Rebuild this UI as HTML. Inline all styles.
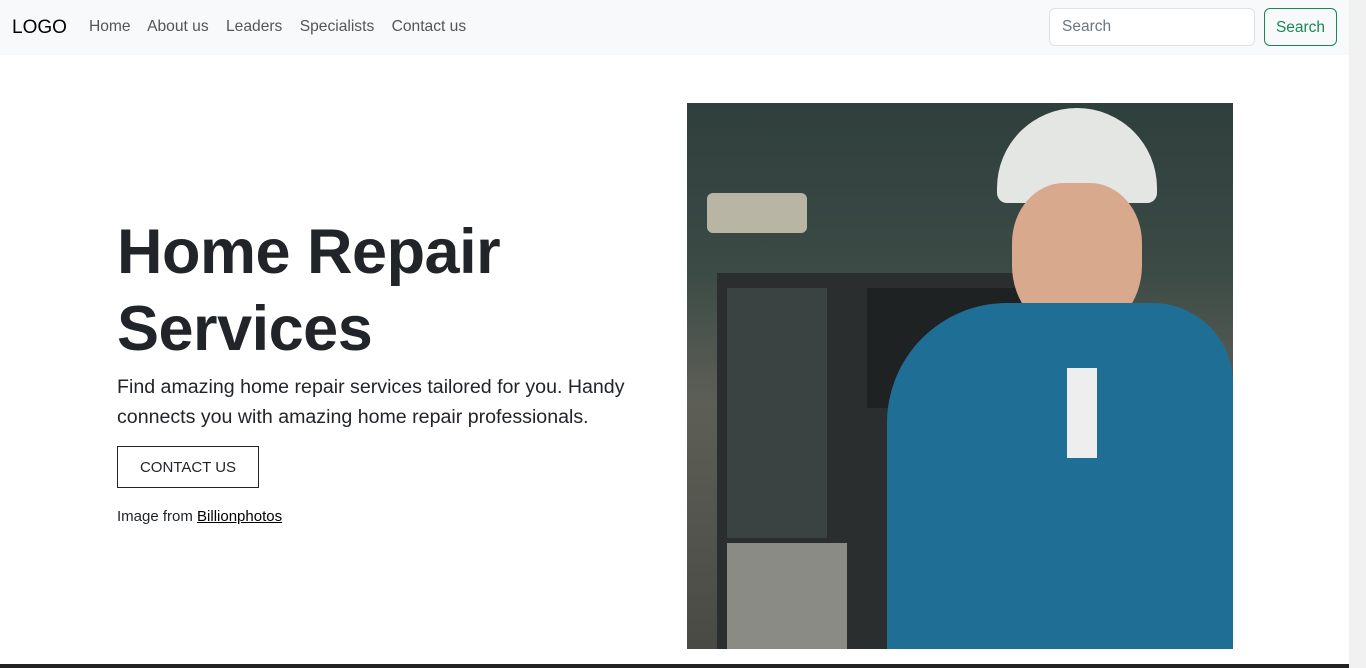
<!DOCTYPE html><html><head><style>
body{margin:0;width:1366px;height:668px;overflow:hidden;font-family:"Liberation Sans",sans-serif;background:#fff;position:relative;color:#212529}
nav{position:absolute;left:0;top:0;width:1349px;height:55px;background:#f8f9fa}
.logo{position:absolute;left:12px;top:17px;font-size:19px;color:#000}
.links{position:absolute;left:89px;top:18px;font-size:15.6px;color:#555}
.links span{margin-right:13px}
.inp{position:absolute;left:1049px;top:8px;width:206px;height:38px;border:1px solid #dee2e6;border-radius:6px;background:#fff;box-sizing:border-box;padding:0 12px;line-height:36px;font-size:15.5px;color:#6c757d}
.btn{position:absolute;left:1264px;top:8px;width:73px;height:38px;border:1px solid #198754;border-radius:6px;box-sizing:border-box;color:#198754;font-size:15.5px;text-align:center;line-height:38px}
.sb{position:absolute;left:1349px;top:0;width:17px;height:668px;background:#f1f1f1}
.th{position:absolute;left:1351px;top:16px;width:13px;height:133px;background:#c1c1c1}
h1{position:absolute;left:117px;top:214px;margin:0;font-size:63px;line-height:77px;font-weight:700;letter-spacing:-.5px}
p{position:absolute;left:117px;top:372px;margin:0;font-size:19.6px;line-height:30px;width:540px}
.cu{position:absolute;left:117px;top:446px;width:142px;height:42px;border:1px solid #212529;box-sizing:border-box;text-align:center;line-height:42px;font-size:15px}
.cr{position:absolute;left:117px;top:508px;font-size:15px}
.cr u{color:#000}
.img{position:absolute;left:687px;top:103px;width:546px;height:546px;overflow:hidden;background:linear-gradient(180deg,#2f3f3c 0%,#3b4a45 30%,#5d5f57 55%,#4a4a44 100%)}
.bot{position:absolute;left:0;top:664px;width:1349px;height:4px;background:#222}
</style></head><body>
<nav><div class="logo">LOGO</div><div class="links"><span>Home</span> <span>About us</span> <span>Leaders</span> <span>Specialists</span> <span>Contact us</span></div>
<div class="inp">Search</div><div class="btn">Search</div></nav>
<div class="sb"><div class="th"></div></div>
<h1>Home Repair<br>Services</h1>
<p>Find amazing home repair services tailored for you. Handy connects you with amazing home repair professionals.</p>
<div class="cu">CONTACT US</div>
<div class="cr">Image from <u>Billionphotos</u></div>
<div class="img">
<div style="position:absolute;left:30px;top:170px;width:340px;height:380px;background:#2a2e2e"></div>
<div style="position:absolute;left:40px;top:185px;width:100px;height:250px;background:#3a4242"></div>
<div style="position:absolute;left:180px;top:185px;width:170px;height:120px;background:#1e2222"></div>
<div style="position:absolute;left:40px;top:440px;width:120px;height:106px;background:#8a8b85"></div>
<div style="position:absolute;left:20px;top:90px;width:100px;height:40px;background:#b8b5a5;border-radius:6px"></div>
<div style="position:absolute;left:310px;top:5px;width:160px;height:95px;background:#e4e6e4;border-radius:80px 80px 10px 10px"></div>
<div style="position:absolute;left:325px;top:80px;width:130px;height:150px;background:#d8a98c;border-radius:40% 40% 45% 45%"></div>
<div style="position:absolute;left:200px;top:200px;width:346px;height:346px;background:#1f6e96;border-radius:120px 80px 0 0"></div>
<div style="position:absolute;left:380px;top:265px;width:30px;height:90px;background:#eee"></div>
</div>
<div class="bot"></div>
</body></html>
